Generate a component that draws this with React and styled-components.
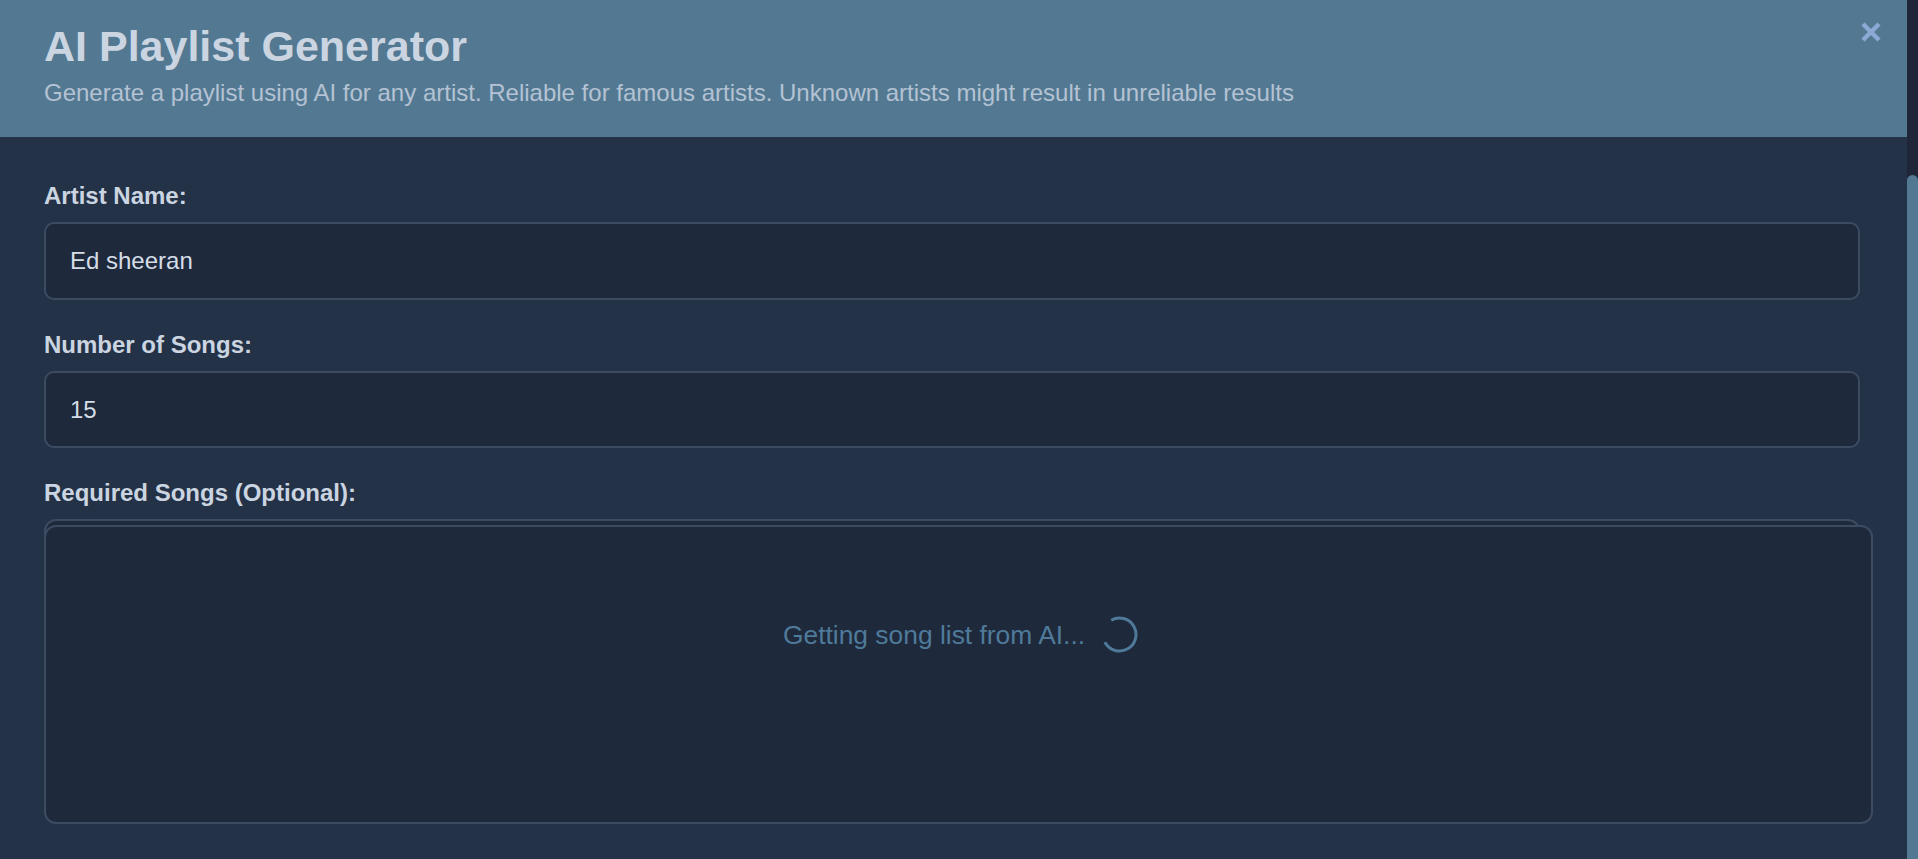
import React from "react";
import styled, { createGlobalStyle } from "styled-components";

const GlobalStyle = createGlobalStyle`
  * { box-sizing: border-box; }
  html, body { margin: 0; padding: 0; height: 100%; }
  body {
    background: #233246;
    font-family: "Liberation Sans", Arial, sans-serif;
    overflow: hidden;
  }
`;

const Page = styled.div`
  display: flex;
  height: 100vh;
  width: 100vw;
  overflow: hidden;
`;

const Main = styled.div`
  flex: 1;
  display: flex;
  flex-direction: column;
  background: #233246;
  min-width: 0;
`;

const Header = styled.header`
  display: flex;
  justify-content: space-between;
  align-items: flex-start;
  background: #537992;
  padding: 22px 25px 0 44px;
  height: 137px;
  flex: 0 0 137px;
`;

const HeaderText = styled.div`
  display: flex;
  flex-direction: column;
`;

const Title = styled.h1`
  margin: 0 0 8px;
  font-size: 43px;
  line-height: 49px;
  font-weight: 700;
  color: #cbd5e1;
`;

const Subtitle = styled.p`
  margin: 0;
  font-size: 24px;
  line-height: 27px;
  color: #b4c2d3;
`;

const CloseButton = styled.button`
  width: 22px;
  height: 20px;
  padding: 0;
  margin: 0;
  border: none;
  background: transparent;
  display: flex;
  align-items: center;
  justify-content: center;
  cursor: pointer;
`;

const Body = styled.div`
  display: flex;
  flex-direction: column;
  gap: 31px;
  padding: 45px 47px 0 44px;
`;

const FieldGroup = styled.div`
  display: flex;
  flex-direction: column;
`;

const Label = styled.label`
  display: block;
  font-size: 24px;
  line-height: 28px;
  font-weight: 700;
  color: #cbd5e1;
  margin-bottom: 12px;
`;

const Input = styled.input`
  width: 100%;
  height: ${(p) => p.$h || 77}px;
  background: #1e293b;
  border: 2px solid #3d4b62;
  border-radius: 10px;
  padding: 0 24px;
  font-family: "Liberation Sans", Arial, sans-serif;
  font-size: 24px;
  color: #d5dde8;
  outline: none;
`;

const AreaWrap = styled.div`
  position: relative;
`;

const TextArea = styled.textarea`
  display: block;
  width: 100%;
  height: 290px;
  background: #1e293b;
  border: 2px solid #3d4b62;
  border-radius: 12px;
  padding: 20px 24px;
  resize: none;
  font-family: "Liberation Sans", Arial, sans-serif;
  font-size: 24px;
  color: #d5dde8;
  outline: none;
`;

const LoadingOverlay = styled.div`
  position: absolute;
  top: 6px;
  left: 0;
  right: -13px;
  height: 299px;
  background: #1e293b;
  border: 2px solid #3d4b62;
  border-radius: 12px;
  display: flex;
  justify-content: center;
  align-items: flex-start;
  padding-top: 89px;
`;

const LoadingRow = styled.div`
  display: flex;
  align-items: center;
  gap: 16px;
  margin-left: 4px;
`;

const LoadingText = styled.span`
  font-size: 26.4px;
  line-height: 30px;
  color: #4f7a9a;
`;

const ScrollRail = styled.div`
  width: 11px;
  flex: 0 0 11px;
  background: #1e2638;
  display: flex;
  flex-direction: column;
  padding-top: 175px;
`;

const ScrollThumb = styled.div`
  flex: 1;
  background: #537992;
  border-radius: 6px 6px 0 0;
`;

const Spinner = () => (
  <svg width="37" height="37" viewBox="0 0 37 37">
    <circle
      cx="18.5"
      cy="18.5"
      r="16.5"
      fill="none"
      stroke="#4f7a9a"
      strokeWidth="3"
      strokeDasharray="78 104"
      transform="rotate(240 18.5 18.5)"
    />
  </svg>
);

const CloseIcon = () => (
  <svg width="22" height="20" viewBox="0 0 22 20">
    <path
      d="M3 2 L19 18 M19 2 L3 18"
      stroke="#8ba9d2"
      strokeWidth="4.5"
      strokeLinecap="butt"
    />
  </svg>
);

export default function App() {
  return (
    <>
      <GlobalStyle />
      <Page>
        <Main>
          <Header>
            <HeaderText>
              <Title>AI Playlist Generator</Title>
              <Subtitle>
                Generate a playlist using AI for any artist. Reliable for famous
                artists. Unknown artists might result in unreliable results
              </Subtitle>
            </HeaderText>
            <CloseButton aria-label="Close">
              <CloseIcon />
            </CloseButton>
          </Header>
          <Body>
            <FieldGroup>
              <Label htmlFor="artist">Artist Name:</Label>
              <Input id="artist" $h={78} defaultValue="Ed sheeran" />
            </FieldGroup>
            <FieldGroup>
              <Label htmlFor="count">Number of Songs:</Label>
              <Input id="count" defaultValue="15" />
            </FieldGroup>
            <FieldGroup>
              <Label htmlFor="required">Required Songs (Optional):</Label>
              <AreaWrap>
                <TextArea id="required" />
                <LoadingOverlay>
                  <LoadingRow>
                    <LoadingText>Getting song list from AI...</LoadingText>
                    <Spinner />
                  </LoadingRow>
                </LoadingOverlay>
              </AreaWrap>
            </FieldGroup>
          </Body>
        </Main>
        <ScrollRail>
          <ScrollThumb />
        </ScrollRail>
      </Page>
    </>
  );
}
